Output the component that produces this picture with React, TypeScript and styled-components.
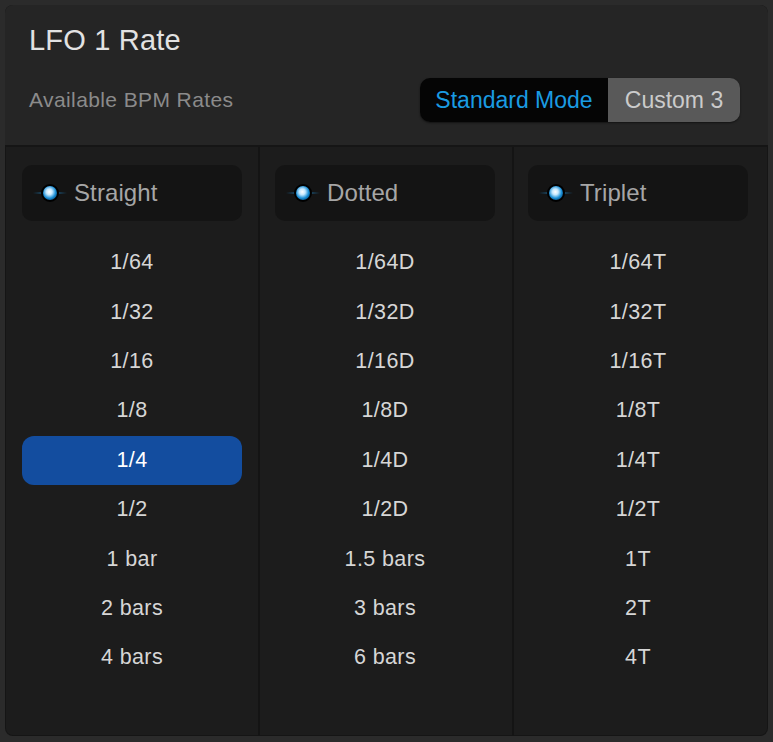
import * as React from 'react';
import styled, { createGlobalStyle } from 'styled-components';

const GlobalStyle = createGlobalStyle`
  html, body {
    margin: 0;
    padding: 0;
    background: #2b2b2b;
  }
  body {
    font-family: "Liberation Sans", Arial, Helvetica, sans-serif;
    -webkit-font-smoothing: antialiased;
  }
`;

const Page = styled.div`
  width: 773px;
  height: 742px;
  padding: 5px 5px 6px 5px;
  box-sizing: border-box;
  background: #2b2b2b;
`;

const Panel = styled.div`
  width: 763px;
  height: 731px;
  border-radius: 8px;
  overflow: hidden;
  display: flex;
  flex-direction: column;
  background: #1c1c1c;
  box-shadow: inset 0 0 0 1px rgba(0, 0, 0, 0.25);
`;

const Header = styled.div`
  height: 142px;
  box-sizing: border-box;
  padding: 0 28px 0 24px;
  display: flex;
  flex-direction: column;
  background: #252525;
  border-bottom: 2px solid #151515;
`;

const Title = styled.div`
  height: 70px;
  display: flex;
  align-items: center;
  font-size: 29px;
  color: #e2e2e2;
  letter-spacing: 0.2px;
`;

const SubRow = styled.div`
  height: 50px;
  display: flex;
  align-items: center;
  justify-content: space-between;
`;

const Subtitle = styled.div`
  font-size: 21px;
  color: #8b8b8b;
  letter-spacing: 0.4px;
`;

const Segmented = styled.div`
  display: flex;
  height: 44px;
  border-radius: 10px;
  overflow: hidden;
  box-shadow: 0 1px 2px rgba(0, 0, 0, 0.5);
`;

const Segment = styled.div<{ $active?: boolean }>`
  display: flex;
  align-items: center;
  justify-content: center;
  width: ${(p) => (p.$active ? '188px' : '132px')};
  box-sizing: border-box;
  font-size: 23px;
  background: ${(p) => (p.$active ? '#050505' : '#595959')};
  color: ${(p) => (p.$active ? '#1a9be2' : '#cbcbcb')};
  white-space: nowrap;
`;

const Body = styled.div`
  flex: 1;
  display: grid;
  grid-template-columns: 253px 254px 254px;
`;

const Column = styled.div<{ $first?: boolean; $inset: number }>`
  display: flex;
  flex-direction: column;
  padding: 18px 0 0 ${(p) => p.$inset}px;
  box-sizing: border-box;
  border-left: ${(p) => (p.$first ? 'none' : '2px solid #141414')};
`;

const GroupHeader = styled.div`
  width: 220px;
  height: 56px;
  box-sizing: border-box;
  border-radius: 10px;
  background: #141414;
  display: flex;
  align-items: center;
  padding-left: 11px;
  gap: 7px;
  margin-bottom: 17px;
`;

const GroupLabel = styled.span`
  font-size: 24px;
  color: #a6a6a6;
  letter-spacing: 0.1px;
`;

const Item = styled.div<{ $selected?: boolean }>`
  width: 220px;
  height: 49.4px;
  display: flex;
  align-items: center;
  justify-content: center;
  font-size: 21.5px;
  letter-spacing: 0.4px;
  color: ${(p) => (p.$selected ? '#ffffff' : '#d6d6d6')};
  background: ${(p) => (p.$selected ? '#134d9f' : 'transparent')};
  border-radius: 12px;
  box-sizing: border-box;
`;

function Led() {
  return (
    <svg width="34" height="22" viewBox="0 0 34 22">
      <defs>
        <linearGradient id="flare" x1="0" x2="1" y1="0" y2="0">
          <stop offset="0" stopColor="#1a7fc0" stopOpacity="0" />
          <stop offset="0.5" stopColor="#2a9be0" stopOpacity="0.75" />
          <stop offset="1" stopColor="#1a7fc0" stopOpacity="0" />
        </linearGradient>
        <radialGradient id="ledCore" cx="0.45" cy="0.42" r="0.6">
          <stop offset="0" stopColor="#ffffff" />
          <stop offset="0.35" stopColor="#c4e8ff" />
          <stop offset="0.75" stopColor="#1b8fd6" />
          <stop offset="1" stopColor="#0b5a92" />
        </radialGradient>
      </defs>
      <rect x="0" y="10" width="34" height="2" fill="url(#flare)" />
      <circle cx="17" cy="11" r="9" fill="#000" />
      <circle cx="17" cy="11" r="7" fill="url(#ledCore)" />
    </svg>
  );
}

const columns = [
  {
    label: 'Straight',
    inset: 17,
    items: ['1/64', '1/32', '1/16', '1/8', '1/4', '1/2', '1 bar', '2 bars', '4 bars'],
  },
  {
    label: 'Dotted',
    inset: 15,
    items: ['1/64D', '1/32D', '1/16D', '1/8D', '1/4D', '1/2D', '1.5 bars', '3 bars', '6 bars'],
  },
  {
    label: 'Triplet',
    inset: 14,
    items: ['1/64T', '1/32T', '1/16T', '1/8T', '1/4T', '1/2T', '1T', '2T', '4T'],
  },
];

export default function App() {
  const selected = '1/4';
  return (
    <Page>
      <GlobalStyle />
      <Panel>
        <Header>
          <Title>LFO 1 Rate</Title>
          <SubRow>
            <Subtitle>Available BPM Rates</Subtitle>
            <Segmented>
              <Segment $active>Standard Mode</Segment>
              <Segment>Custom 3</Segment>
            </Segmented>
          </SubRow>
        </Header>
        <Body>
          {columns.map((col, i) => (
            <Column key={col.label} $first={i === 0} $inset={col.inset}>
              <GroupHeader>
                <Led />
                <GroupLabel>{col.label}</GroupLabel>
              </GroupHeader>
              {col.items.map((it) => (
                <Item key={it} $selected={it === selected}>
                  {it}
                </Item>
              ))}
            </Column>
          ))}
        </Body>
      </Panel>
    </Page>
  );
}
